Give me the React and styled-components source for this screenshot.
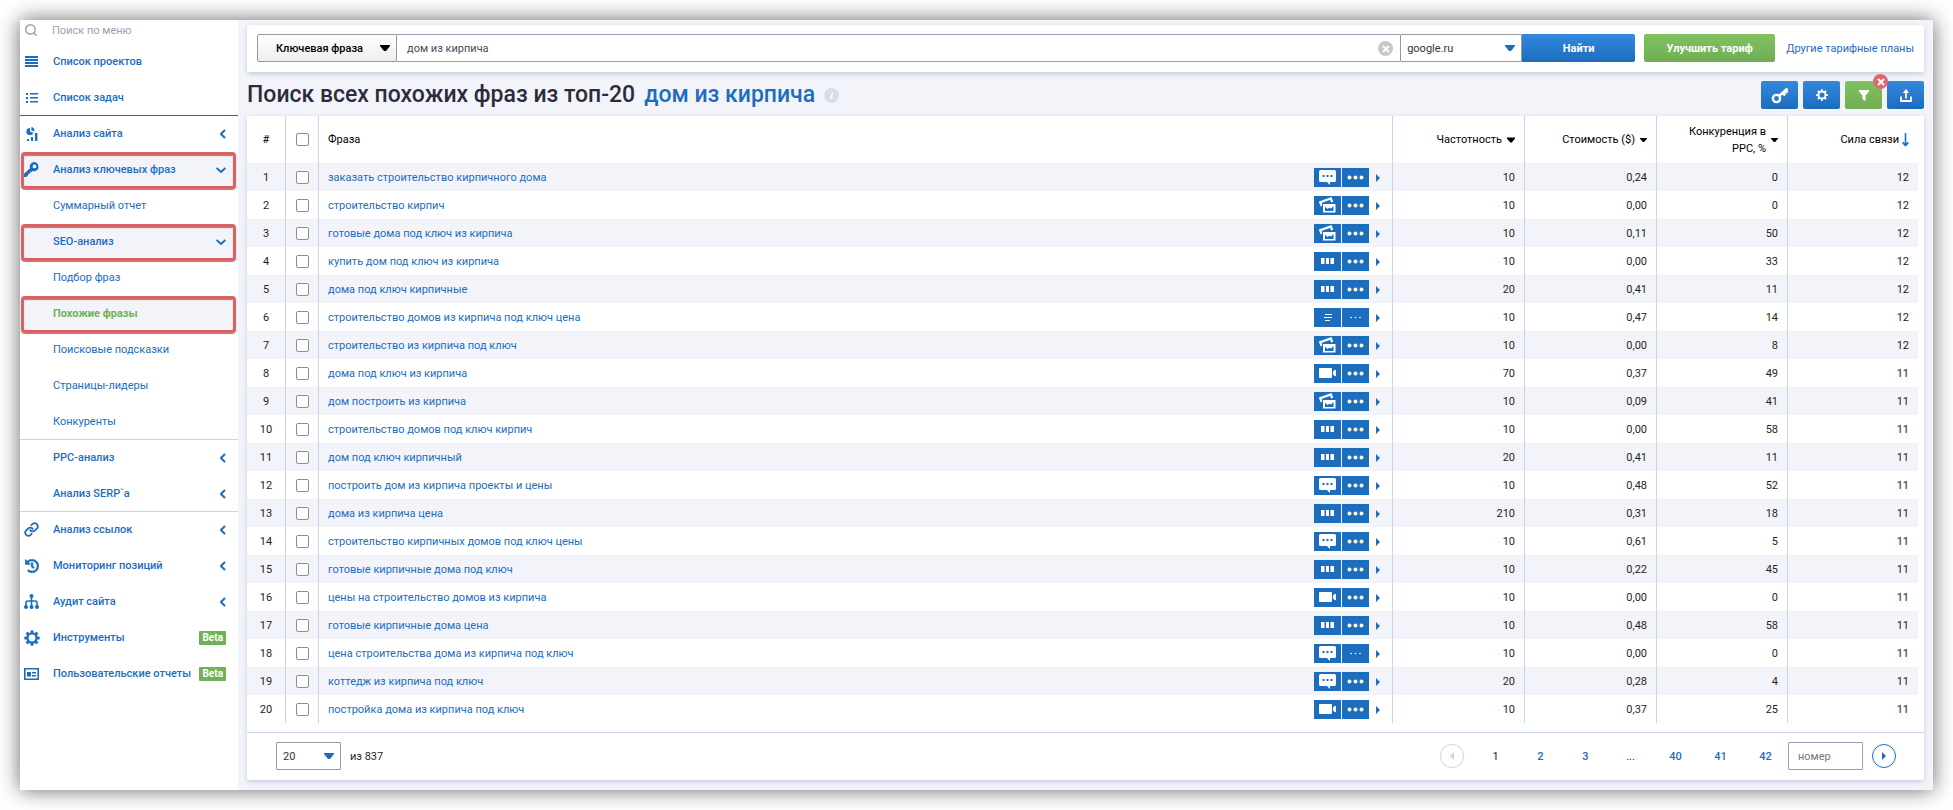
import React from 'react';
import styled, { createGlobalStyle } from 'styled-components';
import { FaHistory } from 'react-icons/fa';
import { Link, Search } from 'lucide-react';

const phrases = [
  ['заказать строительство кирпичного дома', 'chat', '10', '0,24', '0', '12'],
  ['строительство кирпич', 'images', '10', '0,00', '0', '12'],
  ['готовые дома под ключ из кирпича', 'images', '10', '0,11', '50', '12'],
  ['купить дом под ключ из кирпича', 'blocks', '10', '0,00', '33', '12'],
  ['дома под ключ кирпичные', 'blocks', '20', '0,41', '11', '12'],
  ['строительство домов из кирпича под ключ цена', 'text', '10', '0,47', '14', '12', true],
  ['строительство из кирпича под ключ', 'images', '10', '0,00', '8', '12'],
  ['дома под ключ из кирпича', 'video', '70', '0,37', '49', '11'],
  ['дом построить из кирпича', 'images', '10', '0,09', '41', '11'],
  ['строительство домов под ключ кирпич', 'blocks', '10', '0,00', '58', '11'],
  ['дом под ключ кирпичный', 'blocks', '20', '0,41', '11', '11'],
  ['построить дом из кирпича проекты и цены', 'chat', '10', '0,48', '52', '11'],
  ['дома из кирпича цена', 'blocks', '210', '0,31', '18', '11'],
  ['строительство кирпичных домов под ключ цены', 'chat', '10', '0,61', '5', '11'],
  ['готовые кирпичные дома под ключ', 'blocks', '10', '0,22', '45', '11'],
  ['цены на строительство домов из кирпича', 'video', '10', '0,00', '0', '11'],
  ['готовые кирпичные дома цена', 'blocks', '10', '0,48', '58', '11'],
  ['цена строительства дома из кирпича под ключ', 'chat', '10', '0,00', '0', '11', true],
  ['коттедж из кирпича под ключ', 'chat', '20', '0,28', '4', '11'],
  ['постройка дома из кирпича под ключ', 'video', '10', '0,37', '25', '11'],
];

const teeth = [0, 45, 90, 135, 180, 225, 270, 315];

const GearIcon = ({ size = 16 }) => (
  <svg width={size} height={size} viewBox="0 0 16 16" fill="currentColor">
    {teeth.map(a => (
      <path key={a} d="M6.2 3.6 6.8 .3h2.4L9.8 3.6z" transform={`rotate(${a} 8 8)`} />
    ))}
    <circle cx="8" cy="8" r="4.500" fill="none" stroke="currentColor" strokeWidth="2.200" />
  </svg>
);

const LinesIcon = () => (
  <svg width="13" height="11" viewBox="0 0 13 11" fill="currentColor">
    <path d="M0 0h13v2H0zM0 3h13v2H0zM0 6h13v2H0zM0 9h13v2H0z" />
  </svg>
);

const TasksIcon = () => (
  <svg width="12" height="10" viewBox="0 0 12 10" fill="currentColor">
    <path d="M0 0h2v2H0zM4 0h8v1.5H4zM0 4h2v2H0zM4 4h8v1.5H4zM0 8h2v2H0zM4 8h8v1.5H4z" />
  </svg>
);

const SiteIcon = () => (
  <svg width="12" height="14" viewBox="0 0 12 14" fill="currentColor">
    <path d="M4 1a3.6 3.6 0 1 0 3.4 4.8L4 4.6z" />
    <path d="M5.4 0v3.4l2.9 1A3.5 3.5 0 0 0 5.4 0z" />
    <path d="M1 12h2v2H1zM5 10h2v4H5zM9 6h2.4v8H9z" />
  </svg>
);

const WrenchKeyIcon = () => (
  <svg width="15" height="15" viewBox="0 0 15 15" fill="currentColor">
    <path
      fillRule="evenodd"
      d="M9.8 0a4.7 4.7 0 0 1 1.6 9.1c-1 .4-2 .3-2.9 0L7.400 10.200H6v1.500H4.500l-.6 1.800-1.500 1.400H0v-3.200L6 6.300A4.700 4.700 0 0 1 9.800 0zm.7 2.500a1.900 1.900 0 1 0 0 3.800 1.900 1.900 0 0 0 0-3.800z"
    />
  </svg>
);

const SitemapIcon = () => (
  <svg width="15" height="15" viewBox="0 0 15 15" fill="currentColor">
    <circle cx="7.500" cy="2" r="2" />
    <circle cx="2" cy="13" r="2" />
    <circle cx="7.500" cy="13" r="2" />
    <circle cx="13" cy="13" r="2" />
    <path d="M7.500 2v11M2 13V8.500q0-1.500 1.500-1.500h8q1.500 0 1.500 1.500V13" fill="none" stroke="currentColor" strokeWidth="1.600" />
  </svg>
);

const ReportIcon = () => (
  <svg width="15" height="12" viewBox="0 0 15 12" fill="currentColor">
    <path fillRule="evenodd" d="M0 0h15v12H0zM1.600 1.600v8.800h11.800V1.600z" />
    <path d="M3 4h4v4.500H3zM8 4h4v1.500H8zM8 7h4v1.500H8z" />
  </svg>
);

const ChevronLeft = () => (
  <svg width="8" height="10" viewBox="0 0 8 10" fill="none" stroke="currentColor" strokeWidth="2">
    <path d="M7 1 3 5l4 4" />
  </svg>
);

const ChevronDown = () => (
  <svg width="10" height="8" viewBox="0 0 10 8" fill="none" stroke="currentColor" strokeWidth="2">
    <path d="M.6 2 5 6l4.400-4" />
  </svg>
);

const KeyIcon = () => (
  <svg width="18" height="17" viewBox="0 0 18 17" fill="none" stroke="currentColor" strokeWidth="2.400">
    <circle cx="5.500" cy="11.500" r="3.600" />
    <path d="M8 9 16.500 1.500" />
    <path d="M12 6l2.200 2.200M14.500 3.600l2 2" strokeWidth="3" />
  </svg>
);

const FilterIcon = () => (
  <svg width="10" height="11" viewBox="0 0 10 11" fill="currentColor">
    <path d="M0 0h10v1.600L6.600 5.500V11L3.400 9V5.500L0 1.600z" />
  </svg>
);

const ExportIcon = () => (
  <svg width="12" height="13" viewBox="0 0 12 13" fill="none" stroke="currentColor" strokeWidth="1.800">
    <path d="M1 7.500V12h10V7.500M6 9.500V2" />
    <path d="M6 0 9.200 4H2.800z" fill="currentColor" stroke="none" />
  </svg>
);

const Caret = ({ width = 10 }) => (
  <svg width={width} height="6" viewBox="0 0 10 6" fill="currentColor">
    <path d="M0 0h10v1L6 6H4L0 1z" />
  </svg>
);

const CaretRight = () => (
  <svg width="4" height="8" viewBox="0 0 4 8" fill="currentColor">
    <path d="M0 0 4 4 0 8z" />
  </svg>
);

const SortArrow = () => (
  <svg width="7" height="14" viewBox="0 0 7 14" fill="none" stroke="#1c6dbe" strokeWidth="1.600">
    <path d="M3.500 0v12M.6 9.400l2.900 3.200 2.900-3.200" />
  </svg>
);

const CrossIcon = () => (
  <svg width="8" height="8" viewBox="0 0 8 8" stroke="#fff" strokeWidth="2">
    <path d="M1 1l6 6M7 1 1 7" />
  </svg>
);

const serpIcons = {
  chat: (
    <svg width="17" height="15" viewBox="0 0 17 15">
      <path fill="#fff" d="M1.500 0h14Q17 0 17 1.500v9q0 1.500-1.500 1.500H11v3l-3-3H1.500Q0 12 0 10.500v-9Q0 0 1.500 0z" />
      <path fill="#1c6dbe" d="M3.500 5h2v2h-2zM7.500 5h2v2h-2zM11.500 5h2v2h-2z" />
    </svg>
  ),
  images: (
    <svg width="17" height="17" viewBox="0 0 17 17">
      <path d="M2.800 9 1.200 5.200 11.800 1.400l1.400 3.800" fill="none" stroke="#fff" strokeWidth="2.200" />
      <path d="M3.500 6.500H17V16H3.500z" fill="#fff" stroke="#1c6dbe" strokeWidth="1" />
      <path fill="#1c6dbe" d="M6 14V9.800L8.600 12l1.600-1.200 1.600.8 2.700-2.400V14z" />
    </svg>
  ),
  blocks: (
    <svg width="13" height="6" viewBox="0 0 13 6" fill="#fff">
      <path d="M0 0h3.500v6H0zM5 0h3v6H5zM9.500 0H13v6H9.500z" />
    </svg>
  ),
  text: (
    <svg width="8" height="7" viewBox="0 0 8 7" fill="#fff">
      <path d="M1 0h7v1H1zM0 3h8v1H0zM1 6h5v1H1z" />
    </svg>
  ),
  video: (
    <svg width="17" height="10" viewBox="0 0 17 10" fill="#fff">
      <path d="M1 0h11q1 0 1 1v8q0 1-1 1H1Q0 10 0 9V1q0-1 1-1zM14 3.500 15.500 2H17v6h-1.500L14 6.500z" />
    </svg>
  ),
};

const Dots = ({ small }) => (
  <svg width="17" height="5" viewBox="0 0 17 5" fill="#fff">
    {(small ? [4, 8.5, 13] : [2.5, 8.5, 14.5]).map(x => (
      <circle key={x} cx={x} cy="2.500" r={small ? 0.8 : 2} />
    ))}
  </svg>
);

const Tool = ({ icon, label, href = '#', active, mark, arrow, beta, sub, bold, last, strong }) => (
  <MenuItem $active={active} $last={last} $strong={strong}>
    <MenuIcon>{icon}</MenuIcon>
    <MenuLink href={href} $bold={bold || !sub} $current={active === 'current'}>
      {label}
    </MenuLink>
    {arrow === 'left' && <ChevronLeft />}
    {arrow === 'down' && <ChevronDown />}
    {beta && <Beta>Beta</Beta>}
    {mark && <Mark />}
  </MenuItem>
);

const Dropdown = ({ label, value, options = [], tone, width }) => (
  <SelectBox $width={width}>
    <Select aria-label={label} defaultValue={value} $tone={tone}>
      {[value, ...options].map(o => (
        <option key={o}>{o}</option>
      ))}
    </Select>
    <SelectCaret $tone={tone}>
      <Caret />
    </SelectCaret>
  </SelectBox>
);

export default function App() {
  return (
    <>
      <GlobalStyle />
      <Window>
        <Sidebar>
          <MenuSearch>
            <Search size={14} strokeWidth={2.5} />
            <MenuInput aria-label="Поиск по меню" placeholder="Поиск по меню" />
          </MenuSearch>
          <Menu>
            <Tool icon={<LinesIcon />} label="Список проектов" />
            <Tool icon={<TasksIcon />} label="Список задач" strong />
            <Tool icon={<SiteIcon />} label="Анализ сайта" arrow="left" />
            <Tool icon={<WrenchKeyIcon />} label="Анализ ключевых фраз" arrow="down" active="open" mark />
            <Tool label="Суммарный отчет" sub />
            <Tool label="SEO-анализ" sub bold arrow="down" active="open" mark />
            <Tool label="Подбор фраз" sub />
            <Tool label="Похожие фразы" sub bold active="current" mark />
            <Tool label="Поисковые подсказки" sub />
            <Tool label="Страницы-лидеры" sub />
            <Tool label="Конкуренты" sub last />
            <Tool label="PPC-анализ" sub bold arrow="left" />
            <Tool label="Анализ SERP`a" sub bold arrow="left" last />
            <Tool icon={<Link size={15} strokeWidth={2.8} />} label="Анализ ссылок" arrow="left" />
            <Tool icon={<FaHistory size={14} stroke="currentColor" strokeWidth={20} />} label="Мониторинг позиций" arrow="left" />
            <Tool icon={<SitemapIcon />} label="Аудит сайта" arrow="left" />
            <Tool icon={<GearIcon />} label="Инструменты" beta />
            <Tool icon={<ReportIcon />} label="Пользовательские отчеты" beta />
          </Menu>
        </Sidebar>

        <Main>
          <SearchCard>
            <Dropdown label="Тип запроса" value="Ключевая фраза" options={['Домен']} tone="grey" width={140} />
            <QueryBox>
              <QueryInput aria-label="Запрос" defaultValue="дом из кирпича" />
              <ClearButton type="button" aria-label="Очистить">
                <CrossIcon />
              </ClearButton>
            </QueryBox>
            <Dropdown label="Поисковая система" value="google.ru" options={['google.com']} width={122} />
            <FindButton type="button">Найти</FindButton>
            <UpgradeButton type="button">Улучшить тариф</UpgradeButton>
            <PlansLink href="#">Другие тарифные планы</PlansLink>
          </SearchCard>

          <TitleBar>
            <Title>
              Поиск всех похожих фраз из топ-20
              <TitleLink href="#">дом из кирпича</TitleLink>
              <Info>i</Info>
            </Title>
            <Actions>
              <ActionButton type="button" aria-label="Ключ">
                <KeyIcon />
              </ActionButton>
              <ActionButton type="button" aria-label="Настройки">
                <GearIcon size={12} />
              </ActionButton>
              <FilterBox>
                <ActionButton type="button" aria-label="Фильтр" $green>
                  <FilterIcon />
                </ActionButton>
                <ResetBadge type="button" aria-label="Сбросить фильтр">
                  <CrossIcon />
                </ResetBadge>
              </FilterBox>
              <ActionButton type="button" aria-label="Экспорт">
                <ExportIcon />
              </ActionButton>
            </Actions>
          </TitleBar>

          <TableCard>
            <TableScroll>
              <Table>
                <colgroup>
                  <Col $width={39} />
                  <Col $width={33} />
                  <Col />
                  <Col $width={132} />
                  <Col $width={132} />
                  <Col $width={131} />
                  <Col $width={130} />
                </colgroup>
                <thead>
                  <tr>
                    <Th $center>#</Th>
                    <Th $center>
                      <Check type="checkbox" aria-label="Выбрать все" />
                    </Th>
                    <Th>Фраза</Th>
                    <Th>
                      <SortButton type="button">Частотность <Caret width={8} /></SortButton>
                    </Th>
                    <Th>
                      <SortButton type="button">Стоимость ($) <Caret width={7} /></SortButton>
                    </Th>
                    <Th>
                      <SortButton type="button">
                        <span>Конкуренция в<br />PPC, %</span>
                        <Caret width={7} />
                      </SortButton>
                    </Th>
                    <Th>
                      <SortButton type="button" $tight>Сила связи <SortArrow /></SortButton>
                    </Th>
                  </tr>
                </thead>
                <tbody>
                  {phrases.map(([text, kind, volume, cost, competition, strength, small], i) => (
                    <Row key={text}>
                      <Td $center>{i + 1}</Td>
                      <Td $center>
                        <Check type="checkbox" aria-label={text} />
                      </Td>
                      <Td>
                        <Phrase>
                          <PhraseLink href="#">{text}</PhraseLink>
                          <Tile>{serpIcons[kind]}</Tile>
                          <Tile>
                            <Dots small={small} />
                          </Tile>
                          <Expand type="button" aria-label="Подробнее">
                            <CaretRight />
                          </Expand>
                        </Phrase>
                      </Td>
                      <Td $right>{volume}</Td>
                      <Td $right>{cost}</Td>
                      <Td $right>{competition}</Td>
                      <Td $right>{strength}</Td>
                    </Row>
                  ))}
                </tbody>
              </Table>
            </TableScroll>
            <Footer>
              <Dropdown label="Строк на странице" value="20" options={['50', '100']} width={65} />
              <Total>из 837</Total>
              <Pager>
                <RoundButton type="button" aria-label="Назад" disabled>
                  <Flip>
                    <CaretRight />
                  </Flip>
                </RoundButton>
                <Pages>
                  <Page>1</Page>
                  <PageLink href="#">2</PageLink>
                  <PageLink href="#">3</PageLink>
                  <Page>...</Page>
                  <PageLink href="#">40</PageLink>
                  <PageLink href="#">41</PageLink>
                  <PageLink href="#">42</PageLink>
                </Pages>
                <PageInput aria-label="Номер страницы" placeholder="номер" />
                <RoundButton type="button" aria-label="Вперед">
                  <CaretRight />
                </RoundButton>
              </Pager>
            </Footer>
          </TableCard>
        </Main>
      </Window>
    </>
  );
}

const GlobalStyle = createGlobalStyle`
  :root {
    --blue: #1c6dbe;
    --green: #72b156;
    --line: #c9d5e6;
    --pale: #f3f4f9;
  }
  * {
    box-sizing: border-box;
  }
  body {
    margin: 0;
    background: #fff;
    color: #1f1f24;
  }
  body, button, input, select {
    font-family: Roboto, Arial, sans-serif;
    font-size: 11px;
    line-height: 17px;
  }
  button {
    padding: 0;
    border: 0;
    background: none;
    cursor: pointer;
  }
  a {
    color: var(--blue);
    text-decoration: none;
  }
  svg {
    display: block;
    flex: none;
  }
`;

const Window = styled.div`
  display: flex;
  margin: 20px;
  background: var(--pale);
  box-shadow: 0 0 20px rgba(0, 0, 0, 0.6);
`;

const Sidebar = styled.aside`
  flex: none;
  width: 218px;
  background: #fff;
`;

const MenuSearch = styled.div`
  display: flex;
  align-items: center;
  gap: 14px;
  height: 24px;
  padding: 0 4px 4px;
  color: #9a9fb5;
`;

const MenuInput = styled.input`
  flex: 1;
  min-width: 0;
  padding: 0;
  border: 0;
  outline: 0;
  &::placeholder {
    color: #9a9fb5;
  }
`;

const Menu = styled.nav`
  display: flex;
  flex-direction: column;
`;

const MenuItem = styled.div`
  position: relative;
  display: flex;
  align-items: center;
  height: 36px;
  padding-right: 12px;
  color: var(--blue);
  background: ${p => (p.$active ? 'var(--pale)' : 'transparent')};
  border-bottom: 1px solid
    ${p => (p.$strong ? 'var(--blue)' : p.$last || p.$active === 'open' ? 'var(--line)' : 'transparent')};
`;

const MenuIcon = styled.span`
  flex: none;
  display: flex;
  justify-content: center;
  width: 23px;
  margin-right: 10px;
`;

const MenuLink = styled.a`
  flex: 1;
  white-space: nowrap;
  font-weight: ${p => (p.$current ? 700 : p.$bold ? 500 : 400)};
  color: ${p => (p.$current ? 'var(--green)' : 'var(--blue)')};
`;

const Beta = styled.span`
  padding: 0 3px;
  border-radius: 1px;
  background: var(--green);
  color: #fff;
  font-size: 10px;
  line-height: 14px;
  font-weight: 700;
`;

/* red frame laid over the highlighted menu rows */
const Mark = styled.span`
  position: absolute;
  inset: 0 2px -2px 1px;
  border: 3px solid #d76365;
  border-radius: 4px;
  box-shadow: 0 1px 1px #8a8a90, inset 0 1px 1px #8a8a90;
  pointer-events: none;
`;

const Main = styled.main`
  flex: 1;
  min-width: 0;
  padding: 5px 9px 10px;
`;

const SearchCard = styled.form`
  display: flex;
  align-items: center;
  padding: 9px 10px 10px;
  border-radius: 2px;
  background: #fff;
  box-shadow: 0 2px 5px #c3cce2;
`;

const SelectBox = styled.div`
  position: relative;
  flex: none;
  width: ${p => p.$width}px;
`;

const Select = styled.select`
  appearance: none;
  display: block;
  width: 100%;
  height: 28px;
  padding: 0 20px 0 ${p => (p.$tone === 'grey' ? 18 : 6)}px;
  border: 1px solid #999;
  border-radius: ${p => (p.$tone === 'grey' ? '2px 0 0 2px' : '1px')};
  background: ${p => (p.$tone === 'grey' ? 'linear-gradient(#fff, #eee)' : '#fff')};
  color: ${p => (p.$tone === 'grey' ? '#000' : '#33333d')};
  font-weight: ${p => (p.$tone === 'grey' ? 500 : 400)};
`;

const SelectCaret = styled.span`
  position: absolute;
  top: 11px;
  right: 7px;
  color: ${p => (p.$tone === 'grey' ? '#000' : 'var(--blue)')};
  pointer-events: none;
`;

const QueryBox = styled.div`
  position: relative;
  flex: 1;
`;

const QueryInput = styled.input`
  display: block;
  width: 100%;
  height: 28px;
  padding: 0 30px 0 10px;
  border: 1px solid #9aa0b6;
  border-width: 1px 0;
  color: #4a4a55;
`;

const ClearButton = styled.button`
  position: absolute;
  top: 7px;
  right: 7px;
  display: flex;
  align-items: center;
  justify-content: center;
  width: 15px;
  height: 15px;
  border-radius: 50%;
  background: #c8c8c8;
`;

const FindButton = styled.button`
  width: 113px;
  height: 28px;
  border-radius: 0 2px 2px 0;
  background: linear-gradient(#3389dd, #1c6cbe);
  color: #fff;
  font-weight: 700;
`;

const UpgradeButton = styled.button`
  width: 131px;
  height: 28px;
  margin: 0 11px 0 9px;
  border-radius: 2px;
  background: linear-gradient(#81c261, #70ad54);
  color: #fff;
  font-weight: 700;
`;

const PlansLink = styled.a`
  white-space: nowrap;
`;

const TitleBar = styled.div`
  display: flex;
  align-items: center;
  justify-content: space-between;
  height: 44px;
  padding-top: 2px;
`;

const Title = styled.h1`
  display: flex;
  align-items: center;
  gap: 9px;
  margin: 0;
  color: #2c2c3c;
  font-size: 23px;
  line-height: 28px;
  font-weight: 500;
`;

const TitleLink = styled.a`
  font-weight: 500;
`;

const Info = styled.span`
  width: 15px;
  height: 15px;
  border-radius: 50%;
  background: #d7ddec;
  color: #fff;
  font: italic 700 11px/15px 'Liberation Serif', serif;
  text-align: center;
`;

const Actions = styled.div`
  display: flex;
  gap: 5px;
`;

const ActionButton = styled.button`
  display: flex;
  align-items: center;
  justify-content: center;
  width: 37px;
  height: 28px;
  border-radius: 2px;
  background: ${p => (p.$green ? 'linear-gradient(#81c261, #70ad54)' : 'linear-gradient(#3389dd, #1c6cbe)')};
  color: #fff;
`;

const FilterBox = styled.div`
  position: relative;
`;

const ResetBadge = styled.button`
  position: absolute;
  top: -7px;
  right: -6px;
  display: flex;
  align-items: center;
  justify-content: center;
  width: 15px;
  height: 15px;
  border-radius: 50%;
  background: #dc6a6c;
`;

const TableCard = styled.section`
  border-radius: 2px;
  background: #fff;
  box-shadow: 0 2px 5px #c3cce2;
`;

const TableScroll = styled.div`
  padding: 0 6px 9px 0;
`;

const Table = styled.table`
  width: 100%;
  table-layout: fixed;
  border-collapse: separate;
  border-spacing: 0;
`;

const Col = styled.col`
  width: ${p => (p.$width ? `${p.$width}px` : 'auto')};
`;

const Th = styled.th`
  height: 47px;
  padding: 0 ${p => (p.$center ? 0 : 9)}px;
  border-right: 1px solid var(--line);
  color: #000;
  font-weight: 400;
  text-align: ${p => (p.$center ? 'center' : 'left')};
  &:last-child {
    border-right: 0;
  }
`;

const Td = styled.td`
  height: 28px;
  padding: 0 ${p => (p.$center ? 0 : 9)}px;
  border-right: 1px solid var(--line);
  text-align: ${p => (p.$center ? 'center' : p.$right ? 'right' : 'left')};
  &:last-child {
    border-right: 0;
  }
`;

const Row = styled.tr`
  &:nth-child(odd) {
    background: var(--pale);
  }
`;

const SortButton = styled.button`
  display: flex;
  align-items: center;
  justify-content: flex-end;
  gap: ${p => (p.$tight ? 3 : 5)}px;
  width: 100%;
  color: #000;
  text-align: right;
  white-space: nowrap;
`;

const Check = styled.input`
  appearance: none;
  display: block;
  width: 13px;
  height: 13px;
  margin: 0 auto;
  border: 1px solid #8c8c8c;
  border-radius: 2px;
  background: #fff;
  &:checked {
    background: var(--blue);
  }
`;

const Phrase = styled.div`
  display: flex;
  align-items: center;
  gap: 1px;
`;

const PhraseLink = styled.a`
  flex: 1;
`;

const Tile = styled.span`
  display: flex;
  align-items: center;
  justify-content: center;
  width: 27px;
  height: 19px;
  background: var(--blue);
`;

const Expand = styled.button`
  padding: 2px 3px 0 6px;
  color: var(--blue);
`;

const Footer = styled.div`
  display: flex;
  align-items: center;
  padding: 9px 28px 10px 29px;
  border-top: 1px solid var(--line);
`;

const Total = styled.span`
  margin-left: 9px;
`;

const Pager = styled.div`
  display: flex;
  align-items: center;
  gap: 9px;
  margin-left: auto;
`;

const RoundButton = styled.button`
  display: flex;
  align-items: center;
  justify-content: center;
  width: 24px;
  height: 24px;
  border: 1px solid currentColor;
  border-radius: 50%;
  color: var(--blue);
  &:disabled {
    color: var(--line);
  }
`;

const Flip = styled.span`
  transform: scaleX(-1);
`;

const Pages = styled.div`
  display: flex;
  margin-right: -9px;
`;

const Page = styled.span`
  width: 45px;
  text-align: center;
`;

const PageLink = styled.a`
  width: 45px;
  font-weight: 500;
  text-align: center;
`;

const PageInput = styled.input`
  width: 75px;
  height: 28px;
  padding: 0 9px;
  border: 1px solid #9aa0b6;
  border-radius: 1px;
  &::placeholder {
    color: #777;
  }
`;
